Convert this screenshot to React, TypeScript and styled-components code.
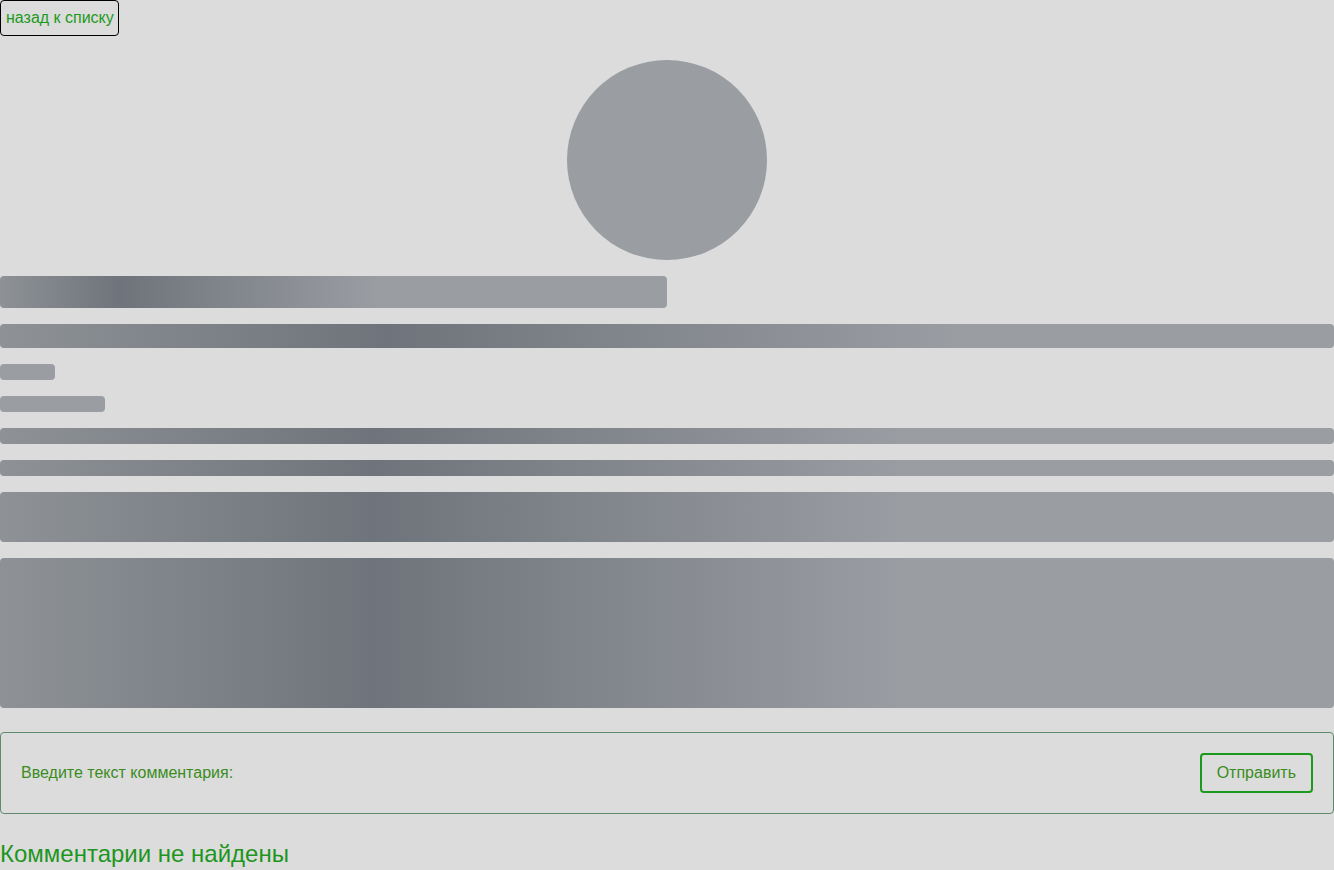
import styled, { createGlobalStyle } from "styled-components";

const Global = createGlobalStyle`
  html, body {
    margin: 0;
    padding: 0;
    background: #dcdcdc;
    font-family: "Liberation Sans", Arial, sans-serif;
  }
`;

const Page = styled.div`
  display: flex;
  flex-direction: column;
  align-items: flex-start;
`;

const BackButton = styled.button`
  font-family: "Liberation Sans", Arial, sans-serif;
  font-size: 16px;
  line-height: 18px;
  color: #1c9a1c;
  background: transparent;
  border: 1px solid #000;
  border-radius: 4px;
  padding: 8px 4px 8px 5px;
  cursor: pointer;
`;

const Card = styled.div`
  width: 100%;
  display: flex;
  flex-direction: column;
  gap: 16px;
  margin-top: 24px;
`;

const Avatar = styled.div`
  align-self: center;
  width: 200px;
  height: 200px;
  border-radius: 50%;
  background: #9a9da2;
`;

// skeleton bar; $peak/$end place the darker shimmer band (percent of width)
const Bone = styled.div<{ $w?: string; $h: number; $peak?: number; $end?: number }>`
  width: ${(p) => p.$w ?? "100%"};
  height: ${(p) => p.$h}px;
  border-radius: 4px;
  background: ${(p) =>
    p.$peak === undefined
      ? "#9a9da2"
      : `linear-gradient(90deg, #8e9296 0%, #6f747c ${p.$peak}%, #9a9da2 ${p.$end}%, #9a9da2 100%)`};
`;

const CommentForm = styled.form`
  box-sizing: border-box;
  width: 100%;
  margin-top: 24px;
  padding: 20px;
  border: 1px solid #5f8a6c;
  border-radius: 4px;
  display: flex;
  align-items: center;
  justify-content: space-between;
`;

const Label = styled.label`
  font-size: 16px;
  color: #3a8c1c;
`;

const SendButton = styled.button`
  font-family: "Liberation Sans", Arial, sans-serif;
  font-size: 16px;
  color: #3a8c1c;
  background: transparent;
  border: 2px solid #1c9a1c;
  border-radius: 4px;
  height: 40px;
  padding: 0 15px;
  cursor: pointer;
`;

const Empty = styled.h2`
  margin: 26px 0 0;
  font-size: 24px;
  font-weight: normal;
  color: #1c961c;
`;

export default function App() {
  return (
    <>
      <Global />
      <Page>
        <BackButton type="button">назад к списку</BackButton>
        <Card>
          <Avatar />
          <Bone $w="50%" $h={32} $peak={18} $end={57} />
          <Bone $h={24} $peak={29} $end={72} />
          <Bone $w="55px" $h={16} />
          <Bone $w="105px" $h={16} />
          <Bone $h={16} $peak={28} $end={68} />
          <Bone $h={16} $peak={28} $end={68} />
          <Bone $h={50} $peak={28} $end={68} />
          <Bone $h={150} $peak={28} $end={68} />
        </Card>
        <CommentForm onSubmit={(e) => e.preventDefault()}>
          <Label>Введите текст комментария:</Label>
          <SendButton type="submit">Отправить</SendButton>
        </CommentForm>
        <Empty>Комментарии не найдены</Empty>
      </Page>
    </>
  );
}
